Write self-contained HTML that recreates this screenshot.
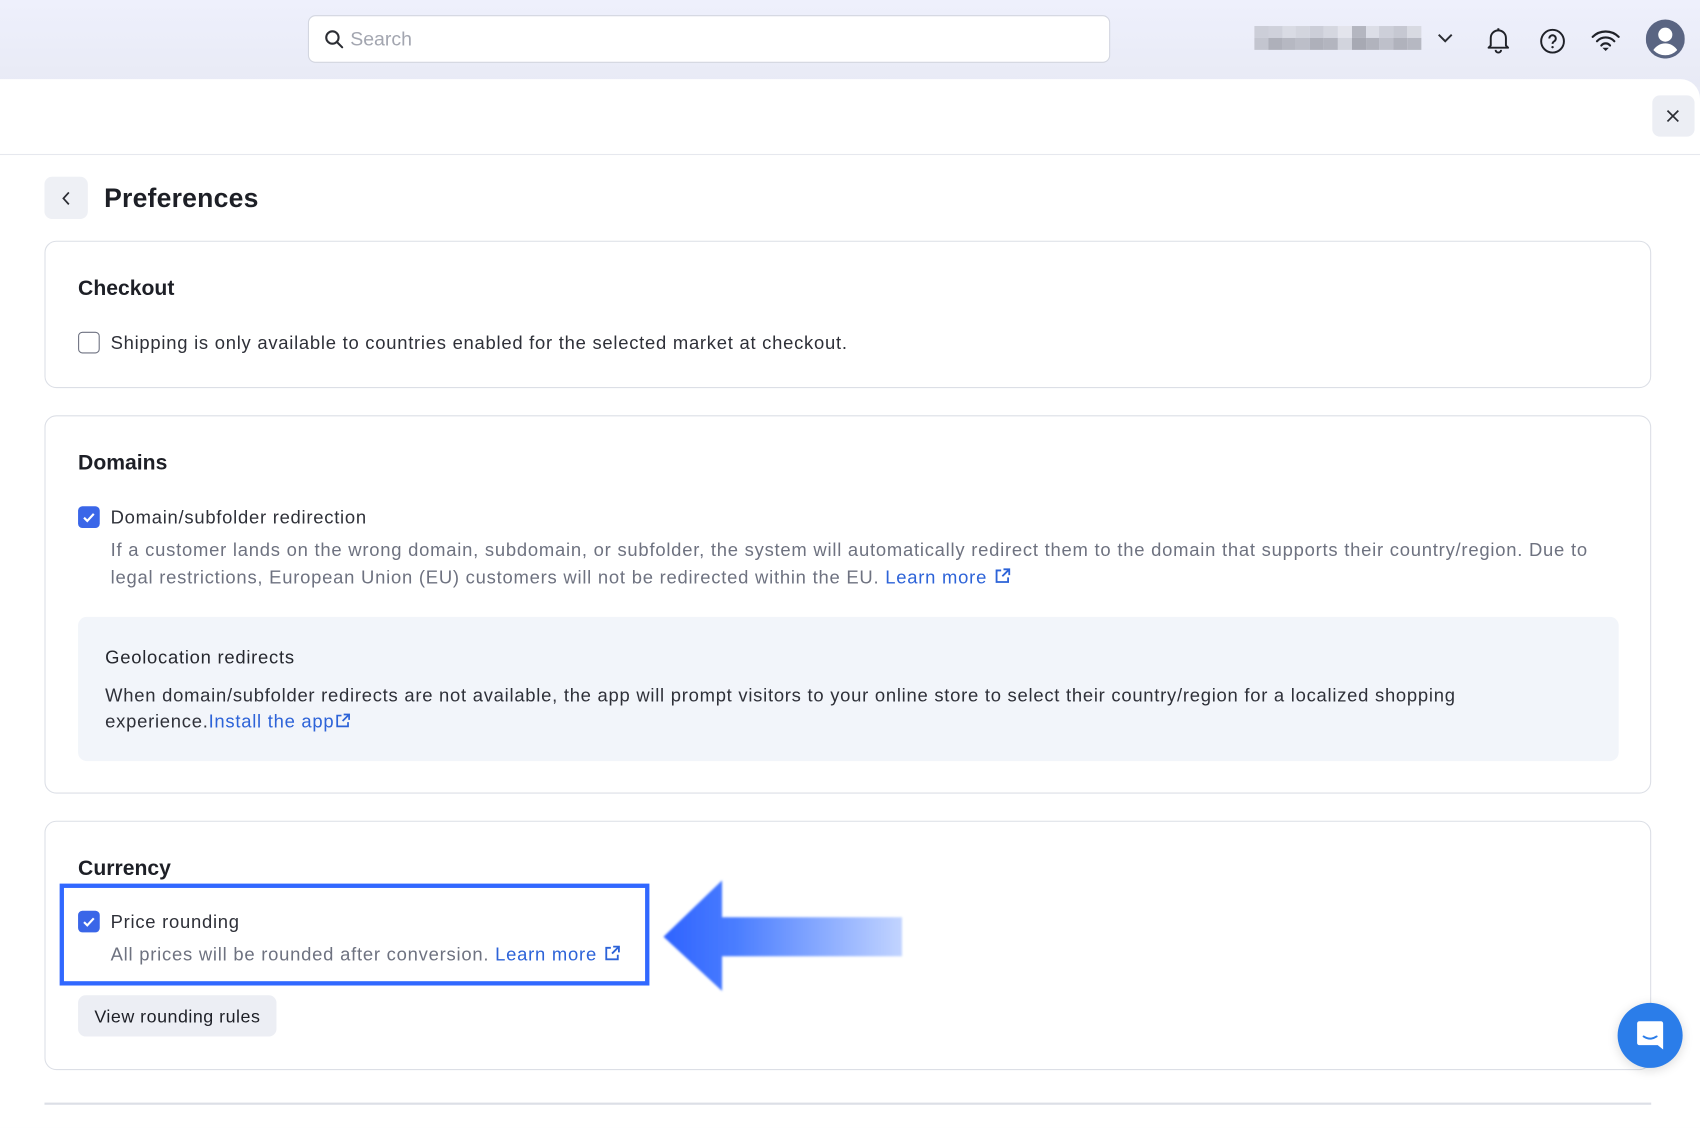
<!DOCTYPE html>
<html><head><meta charset="utf-8">
<style>
*{box-sizing:border-box;margin:0;padding:0}
html,body{width:1700px;height:1128px;overflow:hidden;background:#fff}
body{font-family:"Liberation Sans",sans-serif;color:#1f2128}
#w{position:absolute;left:0;top:0;width:1568px;height:1040px;transform:scale(1.08418);transform-origin:0 0;background:#e9ebf6}
.abs{position:absolute}
.top{left:0;top:0;width:1568px;height:80px;background:linear-gradient(#eef0fc,#e8eaf5)}
.search{left:284px;top:14px;width:740px;height:44px;background:#fff;border:1px solid #d3d6e0;border-radius:7px}
.panel{left:0;top:73px;width:1568px;height:967px;background:#fff;border-radius:0 18px 0 0}
.card{border:1.5px solid #dcdfe6;border-radius:11px;background:#fff;left:41px;width:1482px}
.h{font-size:19.5px;font-weight:bold;color:#1d1f26;white-space:nowrap}
.t{font-size:17px;color:#2e3038;white-space:nowrap;letter-spacing:.68px}
.g{font-size:17px;color:#6e7280;white-space:nowrap;letter-spacing:.7px}
.l{color:#2d63d8}
.cb{width:20px;height:20px;border-radius:4px}
.cb.off{border:1.8px solid #6d7180;background:#fff}
.cb.on{background:#3a66e8}
.pxr{display:flex;height:11px}
.pxr span{flex:1}
</style></head><body>
<div id="w">
<div class="abs top"></div>
<div class="abs search">
<svg class="abs" style="left:14px;top:12px" width="19" height="19" viewBox="0 0 20 20"><circle cx="8" cy="8" r="6" fill="none" stroke="#2b2d33" stroke-width="2"/><path d="M12.5 12.5L17.5 17.5" stroke="#2b2d33" stroke-width="2" stroke-linecap="round"/></svg>
<div class="abs" style="left:38px;top:11px;font-size:18px;color:#a3a6b0">Search</div>
</div>
<div class="abs" style="left:1157px;top:24px;width:154px;height:22px">
<div class="pxr"><span style="background:#ccced8"></span><span style="background:#cfd1db"></span><span style="background:#d9dbe4"></span><span style="background:#d3d5de"></span><span style="background:#ccced8"></span><span style="background:#d5d7e0"></span><span style="background:#e3e4ec"></span><span style="background:#b4b6c0"></span><span style="background:#dcdee7"></span><span style="background:#cdcfd9"></span><span style="background:#c6c8d2"></span><span style="background:#d8dae2"></span></div>
<div class="pxr"><span style="background:#c3c5cf"></span><span style="background:#aeb0ba"></span><span style="background:#b6b8c2"></span><span style="background:#bcbec8"></span><span style="background:#aeb0ba"></span><span style="background:#b3b5bf"></span><span style="background:#d2d4dd"></span><span style="background:#a7a9b3"></span><span style="background:#b1b3bd"></span><span style="background:#bec0ca"></span><span style="background:#b0b2bc"></span><span style="background:#b6b8c2"></span></div>
</div>
<svg class="abs" style="left:1325px;top:29px" width="16" height="12" viewBox="0 0 16 12"><path d="M2 3l6 6 6-6" fill="none" stroke="#2b2d33" stroke-width="1.8"/></svg>
<svg class="abs" style="left:1370px;top:24px" width="24" height="26" viewBox="0 0 24 26"><path d="M5 18V11a7 7 0 0 1 14 0v7l2 2H3z" fill="none" stroke="#1f2128" stroke-width="1.8" stroke-linejoin="round"/><path d="M9.5 22a2.5 2.5 0 0 0 5 0" fill="none" stroke="#1f2128" stroke-width="1.8"/><path d="M12 2v2" stroke="#1f2128" stroke-width="1.8"/></svg>
<svg class="abs" style="left:1420px;top:26px" width="24" height="24" viewBox="0 0 24 24"><circle cx="12" cy="12" r="10.5" fill="none" stroke="#1f2128" stroke-width="1.8"/><path d="M9 9.5a3 3 0 1 1 4.5 2.6c-1 .6-1.5 1.2-1.5 2.4" fill="none" stroke="#1f2128" stroke-width="1.8"/><circle cx="12" cy="17.5" r="1.1" fill="#1f2128"/></svg>
<svg class="abs" style="left:1467px;top:26px" width="28" height="22" viewBox="0 0 28 22"><path d="M2 8a17 17 0 0 1 24 0M6 12a11 11 0 0 1 16 0M10 16a5 5 0 0 1 8 0" fill="none" stroke="#1f2128" stroke-width="2" stroke-linecap="round"/><path d="M11 18l3 3 3-3z" fill="#1f2128"/></svg>
<svg class="abs" style="left:1518px;top:18px" width="36" height="36" viewBox="0 0 36 36"><circle cx="18" cy="18" r="18" fill="#5a6582"/><circle cx="18" cy="14" r="6.5" fill="#fff"/><path d="M6.5 29a13 13 0 0 1 23 0a15.5 15.5 0 0 1-23 0z" fill="#fff"/><circle cx="18" cy="18" r="16" fill="none" stroke="#5a6582" stroke-width="2"/></svg>

<div class="abs panel"></div>
<div class="abs" style="left:1524px;top:88px;width:39px;height:38px;background:#eceef4;border-radius:7px"></div>
<svg class="abs" style="left:1536px;top:100px" width="14" height="14" viewBox="0 0 14 14"><path d="M2 2l10 10M12 2L2 12" stroke="#2b2d33" stroke-width="1.6"/></svg>
<div class="abs" style="left:0;top:142px;width:1568px;height:1px;background:#e6e8ee"></div>

<div class="abs" style="left:41px;top:163px;width:40px;height:39px;background:#eef0f5;border-radius:7px"></div>
<svg class="abs" style="left:55px;top:175px" width="12" height="16" viewBox="0 0 12 16"><path d="M8.5 2.5L3.5 8l5 5.5" fill="none" stroke="#2b2d33" stroke-width="1.6"/></svg>
<div class="abs" style="left:96px;top:170px;font-size:24.5px;font-weight:bold;color:#1d1f26;letter-spacing:.2px">Preferences</div>

<div class="abs card" style="top:222px;height:136px"></div>
<div class="abs h" style="left:72px;top:255px">Checkout</div>
<div class="abs cb off" style="left:72px;top:306px"></div>
<div class="abs t" style="left:102px;top:307px">Shipping is only available to countries enabled for the selected market at checkout.</div>

<div class="abs card" style="top:383px;height:349px"></div>
<div class="abs h" style="left:72px;top:416px">Domains</div>
<div class="abs cb on" style="left:72px;top:467px"><svg width="20" height="20" viewBox="0 0 20 20"><path d="M5.5 10.5l3 3 6-6.5" fill="none" stroke="#fff" stroke-width="2"/></svg></div>
<div class="abs t" style="left:102px;top:468px">Domain/subfolder redirection</div>
<div class="abs g" style="left:102px;top:498px">If a customer lands on the wrong domain, subdomain, or subfolder, the system will automatically redirect them to the domain that supports their country/region. Due to</div>
<div class="abs g" style="left:102px;top:523px">legal restrictions, European Union (EU) customers will not be redirected within the EU. <span class="l">Learn more</span> <svg width="17" height="17" viewBox="0 0 16 16" style="vertical-align:-2px"><path d="M7 3H3v10h10V9M9 2h5v5M14 2L8 8" fill="none" stroke="#2d63d8" stroke-width="1.6"/></svg></div>
<div class="abs" style="left:72px;top:569px;width:1421px;height:133px;background:#f2f5fa;border-radius:8px"></div>
<div class="abs t" style="left:97px;top:597px;color:#25272e">Geolocation redirects</div>
<div class="abs t" style="left:97px;top:632px">When domain/subfolder redirects are not available, the app will prompt visitors to your online store to select their country/region for a localized shopping</div>
<div class="abs t" style="left:97px;top:656px">experience.<span class="l">Install the app</span><svg width="16" height="16" viewBox="0 0 16 16" style="vertical-align:-2px"><path d="M7 3H3v10h10V9M9 2h5v5M14 2L8 8" fill="none" stroke="#2d63d8" stroke-width="1.6"/></svg></div>

<div class="abs card" style="top:757px;height:230px"></div>
<div class="abs h" style="left:72px;top:790px">Currency</div>
<div class="abs" style="left:55px;top:815px;width:544px;height:94px;border:4.5px solid #3168ff"></div>
<div class="abs cb on" style="left:72px;top:840px"><svg width="20" height="20" viewBox="0 0 20 20"><path d="M5.5 10.5l3 3 6-6.5" fill="none" stroke="#fff" stroke-width="2"/></svg></div>
<div class="abs t" style="left:102px;top:841px">Price rounding</div>
<div class="abs g" style="left:102px;top:871px">All prices will be rounded after conversion. <span class="l">Learn more</span> <svg width="17" height="17" viewBox="0 0 16 16" style="vertical-align:-2px"><path d="M7 3H3v10h10V9M9 2h5v5M14 2L8 8" fill="none" stroke="#2d63d8" stroke-width="1.6"/></svg></div>
<div class="abs" style="left:72px;top:918px;width:183px;height:38px;background:#eceef4;border-radius:7px"></div>
<div class="abs" style="left:87px;top:929px;font-size:16.5px;color:#1d1f26;white-space:nowrap;letter-spacing:.45px">View rounding rules</div>

<svg class="abs" style="left:608px;top:808px" width="230" height="110" viewBox="0 0 230 110"><defs><linearGradient id="ag" x1="0" x2="1"><stop offset="0" stop-color="#2f63ff"/><stop offset=".3" stop-color="#4a7dff"/><stop offset="1" stop-color="#c2d4ff"/></linearGradient><filter id="bl"><feGaussianBlur stdDeviation="1"/></filter></defs><path d="M4 56L58 4V38H224V74H58V106Z" fill="url(#ag)" filter="url(#bl)"/></svg>

<div class="abs" style="left:41px;top:1017px;width:1482px;height:1.5px;background:#dcdfe6"></div>

<div class="abs" style="left:1492px;top:925px;width:60px;height:60px;border-radius:50%;background:#2b7de9;box-shadow:0 2px 10px rgba(0,0,0,.15)"></div>
<svg class="abs" style="left:1508px;top:940px" width="28" height="30" viewBox="0 0 28 30"><path d="M4 2h20a2 2 0 0 1 2 2v24l-5-4H4a2 2 0 0 1-2-2V4a2 2 0 0 1 2-2z" fill="#fff"/><path d="M8 16q6 4 12 0" fill="none" stroke="#2b7de9" stroke-width="1.8" stroke-linecap="round"/></svg>
</div>
</body></html>
